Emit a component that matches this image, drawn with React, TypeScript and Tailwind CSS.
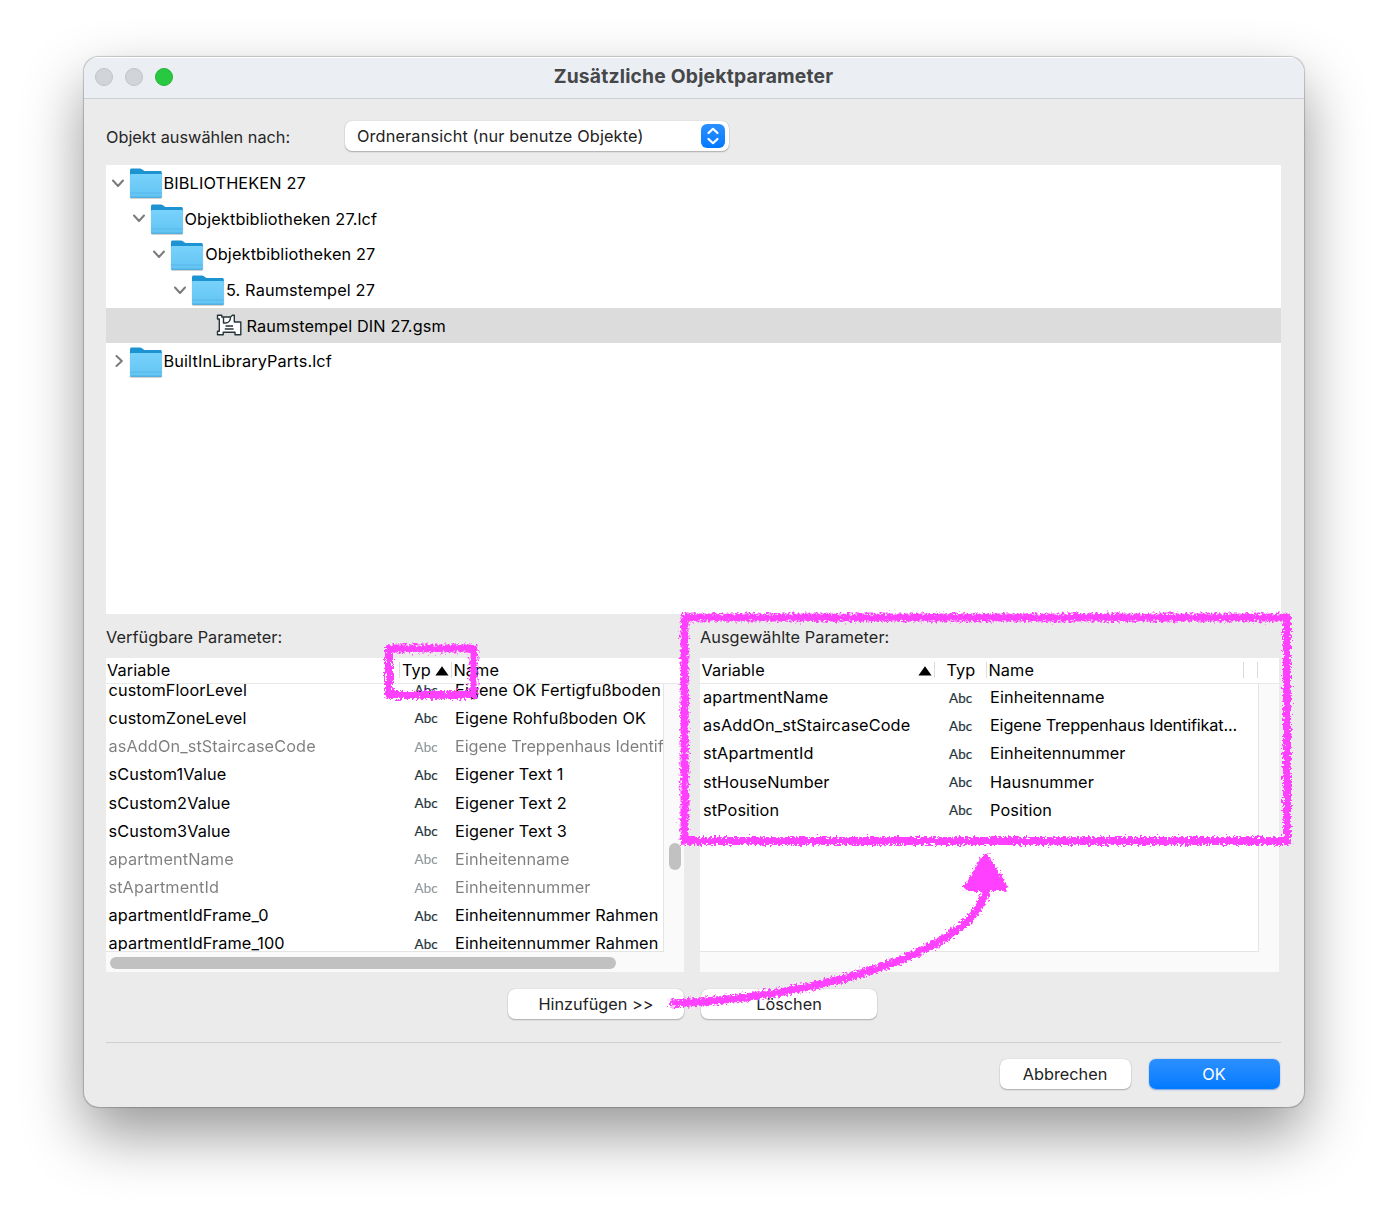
import { useState } from 'react'

type ParameterRow = {
  variable: string
  name: string
  used?: boolean
  tight?: boolean
}

const AVAILABLE: ParameterRow[] = [
  { variable: 'customFloorLevel', name: 'Eigene OK Fertigfußboden' },
  { variable: 'customZoneLevel', name: 'Eigene Rohfußboden OK' },
  { variable: 'asAddOn_stStaircaseCode', name: 'Eigene Treppenhaus Identif', used: true, tight: true },
  { variable: 'sCustom1Value', name: 'Eigener Text 1' },
  { variable: 'sCustom2Value', name: 'Eigener Text 2' },
  { variable: 'sCustom3Value', name: 'Eigener Text 3' },
  { variable: 'apartmentName', name: 'Einheitenname', used: true },
  { variable: 'stApartmentId', name: 'Einheitennummer', used: true },
  { variable: 'apartmentIdFrame_0', name: 'Einheitennummer Rahmen' },
  { variable: 'apartmentIdFrame_100', name: 'Einheitennummer Rahmen' },
]

const SELECTED: ParameterRow[] = [
  { variable: 'apartmentName', name: 'Einheitenname' },
  { variable: 'asAddOn_stStaircaseCode', name: 'Eigene Treppenhaus Identifikat...', tight: true },
  { variable: 'stApartmentId', name: 'Einheitennummer' },
  { variable: 'stHouseNumber', name: 'Hausnummer' },
  { variable: 'stPosition', name: 'Position' },
]

const TREE = [
  { label: 'BIBLIOTHEKEN 27', indent: 'pl-[5.5px]', open: true },
  { label: 'Objektbibliotheken 27.lcf', indent: 'pl-[26.5px]', open: true },
  { label: 'Objektbibliotheken 27', indent: 'pl-[47.2px]', open: true },
  { label: '5. Raumstempel 27', indent: 'pl-[68px]', open: true },
  { label: 'Raumstempel DIN 27.gsm', indent: 'pl-[110px]', file: true },
  { label: 'BuiltInLibraryParts.lcf', indent: 'pl-[5.5px]', open: false },
]

function FolderIcon() {
  return (
    <svg className="mt-[2px] h-[33px] w-[34px] shrink-0" viewBox="0 0 34 33">
      <defs>
        <linearGradient id="folderFront" x1="0" y1="0" x2="0" y2="1">
          <stop offset="0" stopColor="#78d2fb" />
          <stop offset="1" stopColor="#62c4f3" />
        </linearGradient>
      </defs>
      <rect x="0.8" y="5" width="32.4" height="27" rx="1.8" fill="#000" opacity="0.18" />
      <path d="M1 3.200c0-1 .7-1.700 1.700-1.700h8.200c.8 0 1.400.2 2 .7l1.800 1.400c.5.4 1 .5 1.600.5h14.900c1 0 1.600.7 1.600 1.600V12H1z" fill="#1e93d2" />
      <path d="M1 8.400c0-1 .7-1.400 1.600-1.400h28.700c1 0 1.600.5 1.600 1.400v20.800c0 1-.6 1.600-1.600 1.600H2.600C1.600 30.800 1 30.200 1 29.200z" fill="url(#folderFront)" />
      <path d="M1 26h31.900" stroke="#50b3e5" strokeWidth="0.7" />
      <path d="M1.300 30.200h31.300" stroke="#3fa3d9" strokeWidth="0.9" />
    </svg>
  )
}

function StampIcon() {
  return (
    <svg className="h-[22px] w-[26px] shrink-0" viewBox="0 0 26 22" fill="#fff" stroke="#27353b" strokeWidth="1.4" strokeLinejoin="round">
      <path d="M1.500 1.200H5.800V3H14.500L16.500 1.200H18.300V8H24.800V20.800H19V18.300H7.200V20.800H1.500V17.200H3.300V5H1.500Z" />
      <path d="M7.500 3.200V9H9.500C12.500 9 14.500 6.500 14.500 3.200" fill="none" />
      <path d="M9.500 12H17M8.800 15H17.600" fill="none" />
    </svg>
  )
}

function Chevron({ open }: { open?: boolean }) {
  return (
    <svg className="h-3 w-3 shrink-0" viewBox="0 0 12 12" fill="none" stroke="#7b7b7b" strokeWidth="2" strokeLinecap="round" strokeLinejoin="round">
      <path d={open ? 'M1 3.500L6 9L11 3.500' : 'M4.500 1L9.800 6L4.500 11'} />
    </svg>
  )
}

function SortArrow() {
  return (
    <svg className="mt-px h-[10px] w-[14px] shrink-0" viewBox="0 0 14 10">
      <path d="M7 .3L13.600 9.600H.4Z" fill="#000" />
    </svg>
  )
}

function Separator() {
  return <span className="h-4 w-px shrink-0 bg-[#dcdcdc]" />
}

function TypeLabel() {
  return (
    <span className="inline-block [-webkit-text-stroke:0.2px_#26353c] font-['Lato'] text-[13.4px] text-[#26353c]">
      Abc
    </span>
  )
}

function Button({ children, primary, className }: { children: string; primary?: boolean; className: string }) {
  return (
    <button
      type="button"
      className={`h-[30px] rounded-[7px] text-center leading-[30px] ${className} ${
        primary
          ? 'bg-linear-to-b from-[#2a90ff] to-[#007aff] text-white shadow-[0_0.5px_1.5px_rgba(0,90,220,0.5)]'
          : 'bg-white text-[#222] shadow-[0_0_1px_rgba(0,0,0,0.25),0_1px_1.5px_rgba(0,0,0,0.25)]'
      }`}
    >
      {children}
    </button>
  )
}

function AvailableTable() {
  return (
    <div className="flex h-[314px] w-[578px] flex-col bg-[#fafafa] tracking-[0.1px]">
      <div className="flex h-[26px] shrink-0 items-center border-b border-[#e8e8e8] bg-white pb-px">
        <span className="w-[293px] pl-px">Variable</span>
        <Separator />
        <span className="w-[35px] pl-[2px]">Typ</span>
        <SortArrow />
        <span className="w-[2px]" />
        <Separator />
        <span className="pl-[1.500px]">Name</span>
      </div>
      <div className="flex h-[268px] shrink-0">
        <div className="w-[558px] overflow-hidden border-r border-b border-[#e4e4e4] bg-white">
          <div className="-mt-[8.300px]">
            {AVAILABLE.map((row) => (
              <div
                key={row.variable}
                className={`flex h-[28.2px] items-center whitespace-nowrap ${row.used ? 'opacity-50' : ''}`}
              >
                <span className="w-[308.500px] shrink-0 pl-[2.500px]">{row.variable}</span>
                <span className="w-[40.500px] shrink-0">
                  <TypeLabel />
                </span>
                <span className={row.tight ? 'tracking-[-0.1px]' : ''}>{row.name}</span>
              </div>
            ))}
          </div>
        </div>
        <div className="flex-1 pt-[159px] pl-[5px]">
          <div className="h-[27px] w-3 rounded-full bg-[#c1c1c1]" />
        </div>
      </div>
      <div className="pt-[5px] pl-[4px]">
        <div className="h-3 w-[506px] rounded-full bg-[#c1c1c1]" />
      </div>
    </div>
  )
}

function SelectedTable() {
  return (
    <div className="flex h-[314px] w-[579px] flex-col bg-[#fafafa] tracking-[0.1px]">
      <div className="flex h-[26px] shrink-0 items-center border-b border-[#e8e8e8] bg-white pb-px">
        <span className="w-[218px] pl-[1.500px]">Variable</span>
        <SortArrow />
        <span className="w-[2px]" />
        <Separator />
        <span className="w-[51px] pl-[11.500px]">Typ</span>
        <Separator />
        <span className="w-[256px] pl-[1.500px]">Name</span>
        <Separator />
        <span className="w-[13px]" />
        <Separator />
      </div>
      <div className="h-[268px] w-[559px] overflow-hidden border-r border-b border-[#e4e4e4] bg-white">
        <div className="-mt-[1px]">
          {SELECTED.map((row) => (
            <div key={row.variable} className="flex h-[28.2px] items-center whitespace-nowrap">
              <span className="w-[249px] shrink-0 pl-[3px]">{row.variable}</span>
              <span className="w-[41px] shrink-0">
                <TypeLabel />
              </span>
              <span className={row.tight ? 'tracking-[-0.17px]' : ''}>{row.name}</span>
            </div>
          ))}
        </div>
      </div>
    </div>
  )
}

// Hand drawn marks over the dialog
function Annotations() {
  return (
    <svg className="pointer-events-none absolute top-0 left-0 h-[1217px] w-[1387px]" viewBox="0 0 1387 1217">
      <defs>
        <filter id="crayon" filterUnits="userSpaceOnUse" x="370" y="600" width="940" height="430">
          <feTurbulence type="fractalNoise" baseFrequency="0.42" numOctaves="3" seed="4" result="noise" />
          <feDisplacementMap in="SourceGraphic" in2="noise" scale="8.5" xChannelSelector="R" yChannelSelector="G" />
        </filter>
      </defs>
      <g filter="url(#crayon)" fill="none" stroke="#ff40ff" strokeWidth="8" strokeLinejoin="round" strokeLinecap="butt">
        <path d="M389 648.500H473.500V695H389Z" />
        <path d="M684.500 617.500H1287V841H684.500Z" />
        <path d="M670 1003.500C828 998 982 946 985.500 888" />
        <path d="M985.500 858L968 887H1003.500Z" fill="#ff40ff" />
      </g>
    </svg>
  )
}

export default function App() {
  const [active, setActive] = useState('Raumstempel DIN 27.gsm')

  return (
    <div className="relative h-[1217px] w-[1387px] overflow-hidden bg-white px-[83.500px] pt-[56.500px] font-['Inter',sans-serif] text-[16.3px] leading-5 text-black">
      <div className="h-[1050px] w-[1220px] overflow-hidden rounded-[15px] bg-[#ebebeb] shadow-[0_0_1px_0.5px_rgba(0,0,0,0.2),0_27px_60px_rgba(0,0,0,0.41)]">
        <div className="flex h-[42.500px] items-center border-b border-[#cdd0d3] bg-[#ebeff4] shadow-[inset_0_1px_0_#fff]">
          <div className="flex w-[400px] gap-3 pl-[11.500px]">
            <span className="h-[18px] w-[18px] rounded-full border border-[#bfc2c6] bg-[#d1d4d9]" />
            <span className="h-[18px] w-[18px] rounded-full border border-[#bfc2c6] bg-[#d1d4d9]" />
            <span className="h-[18px] w-[18px] rounded-full border border-[#1fb436] bg-[#28c840]" />
          </div>
          <h1 className="-mt-[3px] w-[420px] text-center text-[19.3px] font-bold tracking-[0.2px] text-[#454749]">
            Zusätzliche Objektparameter
          </h1>
        </div>

        <div className="px-[22.500px] pt-[22px]">
          <div className="flex h-[30px] items-center">
            <span className="w-[238.500px] pt-px text-[#262626]">Objekt auswählen nach:</span>
            <div className="flex h-[30px] w-[384px] items-center justify-between rounded-[7px] bg-white pr-[3.500px] pl-[12.500px] tracking-[0.140px] text-[#222] shadow-[0_0_1px_rgba(0,0,0,0.25),0_1px_1.5px_rgba(0,0,0,0.25)]">
              Ordneransicht (nur benutze Objekte)
              <span className="flex h-6 w-6 items-center justify-center rounded-[6px] bg-linear-to-b from-[#2a90ff] to-[#007aff]">
                <svg className="h-5 w-4" viewBox="0 0 16 20" fill="none" stroke="#fff" strokeWidth="2.200" strokeLinecap="round" strokeLinejoin="round">
                  <path d="M3.500 7L8 2.800L12.500 7M3.500 13L8 17.200L12.500 13" />
                </svg>
              </span>
            </div>
          </div>

          <div className="mt-[14px] h-[449px] w-[1175px] bg-white tracking-[0.130px]">
            {TREE.map(({ label, indent, open, file }) => (
              <div
                key={label}
                onClick={() => setActive(label)}
                className={`flex h-[35.670px] items-center ${indent} ${active === label ? 'bg-[#dcdcdc]' : ''}`}
              >
                {file ? (
                  <>
                    <StampIcon />
                    <span className="pt-px pl-[4.500px]">{label}</span>
                  </>
                ) : (
                  <>
                    <Chevron open={open} />
                    <span className="w-[5px]" />
                    <FolderIcon />
                    <span className="pt-[0.500px] pl-px">{label}</span>
                  </>
                )}
              </div>
            ))}
          </div>

          <div className="flex gap-4 pt-[13px]">
            <div>
              <p className="mb-[11px] tracking-[0.050px] text-[#262626]">Verfügbare Parameter:</p>
              <AvailableTable />
            </div>
            <div>
              <p className="mb-[11px] tracking-[0.050px] text-[#262626]">Ausgewählte Parameter:</p>
              <SelectedTable />
            </div>
          </div>

          <div className="flex gap-[17px] pt-[17px] pl-[402px]">
            <Button className="w-[176px]">{'Hinzufügen >>'}</Button>
            <Button className="w-[176px]">Löschen</Button>
          </div>

          <div className="mt-[23px] flex w-[1175px] justify-end gap-[18px] border-t border-[#cfcfcf] pt-[16px] pr-[1.500px]">
            <Button className="w-[131px]">Abbrechen</Button>
            <Button primary className="w-[131px]">OK</Button>
          </div>
        </div>
      </div>
      <Annotations />
    </div>
  )
}
